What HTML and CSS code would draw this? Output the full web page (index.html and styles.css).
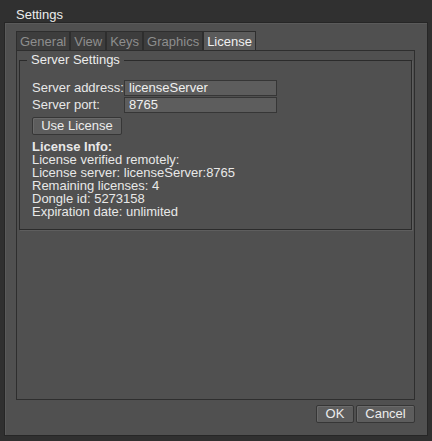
FILE: index.html
```html
<!DOCTYPE html>
<html>
<head>
<meta charset="utf-8">
<link rel="stylesheet" href="styles.css">
</head>
<body>
<div class="window">
  <div class="titlebar">Settings</div>
  <div class="frame">
    <div class="tabs">
      <div class="tab">General</div>
      <div class="tab">View</div>
      <div class="tab">Keys</div>
      <div class="tab">Graphics</div>
      <div class="tab active">License</div>
    </div>
    <div class="panel">
      <fieldset class="group">
        <legend>Server Settings</legend>
        <div class="form">
          <div class="label">Server address:</div>
          <div class="input">licenseServer</div>
          <div class="label">Server port:</div>
          <div class="input">8765</div>
        </div>
        <div class="btn use">Use License</div>
        <div class="info">
          <div class="bold">License Info:</div>
          <div>License verified remotely:</div>
          <div>License server: licenseServer:8765</div>
          <div>Remaining licenses: 4</div>
          <div>Dongle id: 5273158</div>
          <div>Expiration date: unlimited</div>
        </div>
      </fieldset>
    </div>
    <div class="buttons">
      <div class="btn ok">OK</div>
      <div class="btn cancel">Cancel</div>
    </div>
  </div>
</div>
</body>
</html>
```
FILE: styles.css
```css
html, body {
  margin: 0;
  padding: 0;
  background: #2f2f2f;
}
body {
  font-family: "Liberation Sans", Arial, sans-serif;
  font-size: 13px;
  color: #e8e8e8;
}
.window {
  width: 432px;
  height: 441px;
  box-sizing: border-box;
  padding: 0 4px 5px 4px;
  background: #303030;
  display: flex;
  flex-direction: column;
}
.titlebar {
  height: 22px;
  line-height: 29px;
  padding-left: 12px;
  color: #ececec;
  font-size: 13px;
}
.frame {
  flex: 1;
  border: 1px solid #262626;
  background: #505050;
  box-shadow: inset 1px 1px 0 #5a5a5a;
  padding: 8px 12px 0 11px;
  display: flex;
  flex-direction: column;
}
.tabs {
  display: flex;
  gap: 0;
  height: 19px;
}
.tab {
  background: #3d3d3d;
  color: #8e8e8e;
  border: 1px solid #2e2e2e;
  border-bottom: none;
  padding: 0 3px;
  line-height: 20px;
}
.tab.active {
  background: #5b5b5b;
  color: #f0f0f0;
}
.panel {
  height: 350px;
  box-sizing: border-box;
  border: 1px solid #2e2e2e;
  background: #505050;
  padding: 2px 2px 0 2px;
}
.group {
  margin: 0;
  border: 1px solid #2b2b2b;
  box-shadow: 1px 1px 0 #5e5e5e;
  padding: 13px 12px 10px 12px;
  height: 177px;
  box-sizing: border-box;
}
.group legend {
  padding: 0 4px;
  margin-left: -5px;
  color: #ececec;
  line-height: 14px;
}
.form {
  display: grid;
  grid-template-columns: 92px 153px;
  row-gap: 1px;
  align-items: center;
}
.label {
  line-height: 16px;
}
.input {
  height: 14px;
  line-height: 14px;
  background: #5d5d5d;
  border: 1px solid #363636;
  padding: 0 4px;
  color: #f0f0f0;
}
.btn {
  background: #5d5d5d;
  border: 1px solid #363636;
  border-radius: 2px;
  box-shadow: inset 1px 1px 0 #6a6a6a;
  text-align: center;
  line-height: 16px;
  color: #ececec;
}
.use {
  width: 88px;
  margin-top: 4px;
}
.info {
  margin-top: 5px;
  line-height: 13px;
}
.bold {
  font-weight: bold;
}
.buttons {
  display: flex;
  justify-content: flex-end;
  gap: 2px;
  margin-top: 5px;
}
.ok { width: 36px; }
.cancel { width: 57px; }
```
